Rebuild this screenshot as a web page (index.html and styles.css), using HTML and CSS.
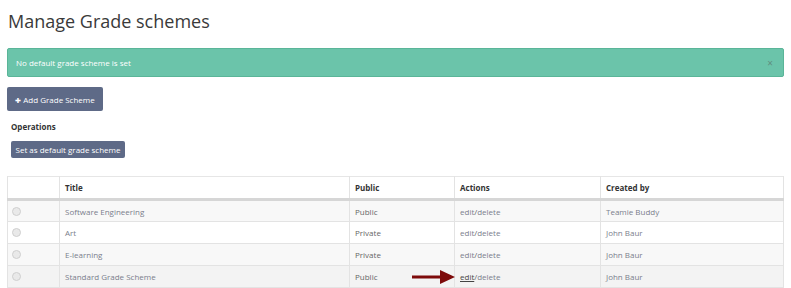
FILE: index.html
```html
<!DOCTYPE html>
<html lang="en">
<head>
  <meta charset="UTF-8" />
  <title>Manage Grade schemes</title>
  <link rel="stylesheet" href="styles.css">
</head>
<body>
  <div class="page">
    <h1 class="page-title">Manage Grade schemes</h1>

    <div class="alert">
      <span>No default grade scheme is set</span>
      <span class="alert-close">&times;</span>
    </div>

    <button class="btn btn-add"><span class="plus">&#10010;</span> Add Grade Scheme</button>

    <div class="operations">
      <div class="operations-label">Operations</div>
      <button class="btn btn-small">Set as default grade scheme</button>
    </div>

    <table class="schemes">
      <thead>
        <tr>
          <th class="col-radio"></th>
          <th class="col-title">Title</th>
          <th class="col-public">Public</th>
          <th class="col-actions">Actions</th>
          <th>Created by</th>
        </tr>
      </thead>
      <tbody>
        <tr>
          <td><span class="radio"></span></td>
          <td><a class="title-link">Software Engineering</a></td>
          <td>Public</td>
          <td><a>edit</a>/<a>delete</a></td>
          <td><a>Teamie Buddy</a></td>
        </tr>
        <tr>
          <td><span class="radio"></span></td>
          <td><a class="title-link">Art</a></td>
          <td>Private</td>
          <td><a>edit</a>/<a>delete</a></td>
          <td><a>John Baur</a></td>
        </tr>
        <tr>
          <td><span class="radio"></span></td>
          <td><a class="title-link">E-learning</a></td>
          <td>Private</td>
          <td><a>edit</a>/<a>delete</a></td>
          <td><a>John Baur</a></td>
        </tr>
        <tr class="hover">
          <td><span class="radio"></span></td>
          <td><a class="title-link">Standard Grade Scheme</a></td>
          <td>Public</td>
          <td class="actions-cell">
            <svg class="arrow" width="44" height="14" viewBox="0 0 44 14">
              <path d="M0 5.5 H28 V0 L43 7 L28 14 V8.5 H0 Z" fill="#7d0a0a"/>
            </svg>
            <a class="hovered">edit</a>/<a>delete</a>
          </td>
          <td><a>John Baur</a></td>
        </tr>
      </tbody>
    </table>
  </div>
</body>
</html>
```

FILE: styles.css
```css
body {
  margin: 0;
  background: #fff;
  font-family: "Open Sans", "Liberation Sans", sans-serif;
  color: #333;
}

.page {
  padding: 0 7px;
}

.page-title {
  margin: 0;
  padding: 9px 0 0 1px;
  height: 48px;
  box-sizing: border-box;
  font-size: 18px;
  font-weight: 400;
  color: #3a3a3a;
  line-height: 24px;
}

.alert {
  display: flex;
  justify-content: space-between;
  align-items: center;
  height: 29px;
  box-sizing: border-box;
  padding: 0 10px 0 8px;
  background: #6bc4aa;
  border: 1px solid #5ab598;
  border-radius: 2px;
  color: #fff;
  font-size: 8px;
}

.alert-close {
  color: #5f8f80;
  font-size: 10px;
}

.btn {
  border: 0;
  border-radius: 2px;
  background: #5e6a87;
  color: #fff;
  font-family: inherit;
  cursor: pointer;
}

.btn-add {
  display: block;
  margin-top: 10px;
  width: 96px;
  height: 24px;
  font-size: 8px;
  padding: 0;
}

.plus {
  font-size: 7px;
}

.operations {
  padding: 9px 4px 0;
}

.operations-label {
  font-size: 8px;
  font-weight: 700;
  line-height: 14px;
}

.btn-small {
  display: block;
  margin-top: 7px;
  width: 114px;
  height: 17px;
  padding: 0;
  font-size: 8px;
}

.schemes {
  margin-top: 18px;
  width: 777px;
  table-layout: fixed;
  border-collapse: collapse;
  border: 1px solid #e6e6e6;
  font-size: 8px;
}

.schemes th,
.schemes td {
  height: 22px;
  box-sizing: border-box;
  padding: 0 5px;
  text-align: left;
  border: 1px solid #e3e3e3;
  border-top: 0;
}

.schemes th {
  font-weight: 700;
  color: #333;
  border-bottom: 3px solid #d6d6d6;
  height: 23px;
}

.schemes td {
  color: #666;
}

.schemes td a {
  color: #7a7e8c;
}

.schemes tbody tr:nth-child(odd) {
  background: #f8f8f8;
}

.schemes tbody tr.hover {
  background: #f3f3f3;
}

.col-radio { width: 52px; }
.col-title { width: 290px; }
.col-public { width: 105px; }
.col-actions { width: 146px; }

.radio {
  display: block;
  width: 7px;
  height: 7px;
  margin-left: -1px;
  border-radius: 50%;
  border: 1px solid #cfcfcf;
  background: #e9e9e9;
}

.actions-cell {
  position: relative;
}

.arrow {
  position: absolute;
  left: -43px;
  top: 4px;
}

.schemes td a.hovered {
  color: #444;
  text-decoration: underline;
}
```
